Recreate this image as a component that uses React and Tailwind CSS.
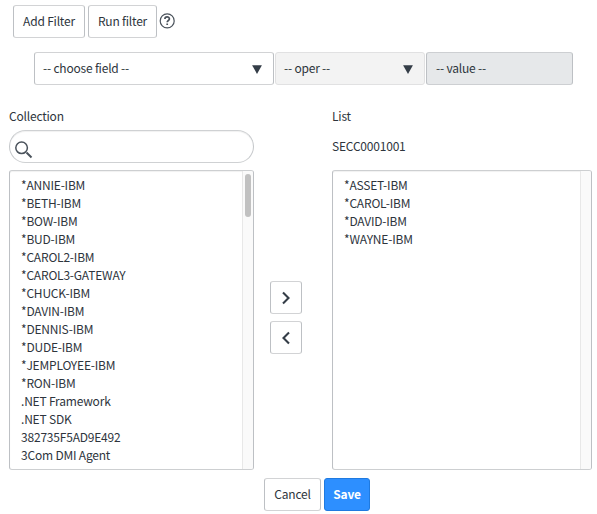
const COLLECTION = [
  '*ANNIE-IBM', '*BETH-IBM', '*BOW-IBM', '*BUD-IBM', '*CAROL2-IBM', '*CAROL3-GATEWAY',
  '*CHUCK-IBM', '*DAVIN-IBM', '*DENNIS-IBM', '*DUDE-IBM', '*JEMPLOYEE-IBM', '*RON-IBM',
  '.NET Framework', '.NET SDK', '382735F5AD9E492', '3Com DMI Agent',
];
const SELECTED = ['*ASSET-IBM', '*CAROL-IBM', '*DAVID-IBM', '*WAYNE-IBM'];

const BUTTON =
  'flex shrink-0 items-center justify-center rounded-[3px] border border-[#bdc0c4] border-y-[#d2d3d5] bg-white pb-[2px] whitespace-nowrap';

function Caret() {
  return (
    <svg width="10" height="9" viewBox="0 0 10 9" className="mt-[3px] shrink-0">
      <path d="M0.1 0.2H9.9L5 8.9Z" fill="#343d47" />
    </svg>
  );
}

function ListBox({ items, thumb, className }) {
  return (
    <div className={'flex h-[300px] overflow-hidden rounded-[3px] border border-[#bdc0c4] border-y-[#cdcfd1] shadow-[inset_0_1px_1px_rgba(0,0,0,0.06)] ' + className}>
      <ul className="grow pt-[5px] pl-[11px]">
        {items.map((item) => (
          <li key={item} className="h-[18px] leading-[18px] whitespace-nowrap">{item}</li>
        ))}
      </ul>
      <div className="flex w-[11px] shrink-0 justify-center border-l border-[#e8e8e8] bg-[#fafafa] pt-[3px]">
        {thumb && <div className="h-[43px] w-[6px] rounded-full bg-[#c1c1c1]" />}
      </div>
    </div>
  );
}

function Chevron({ d }) {
  return (
    <svg width="10" height="14" viewBox="0 0 10 14" fill="none" stroke="#343d47" strokeWidth="2.1" className="mt-[2px]">
      <path d={d} />
    </svg>
  );
}

export default function App() {
  return (
    <div className="h-[514px] w-[597px] overflow-hidden bg-white pt-[5px] font-['Noto_Sans_CJK_SC',sans-serif] text-[12px] leading-[18px] tracking-[-0.2px] text-[#2e353d]">
      <div className="flex h-[33px] pl-[13px]">
        <button className={BUTTON + ' w-[72px]'}>Add Filter</button>
        <button className={BUTTON + ' ml-[3px] w-[69px]'}>Run filter</button>
        <svg width="16" height="16" viewBox="0 0 16 16" fill="none" stroke="#4a525b" className="mt-[8px] ml-[2px]">
          <circle cx="8.2" cy="7.9" r="7" strokeWidth="1.2" />
          <path d="M5.9 6.1C5.9 3.2 10.4 3.2 10.4 6C10.4 7.5 8.2 7.5 8.2 9.3M8.2 10.6V12" strokeWidth="1.7" />
        </svg>
      </div>

      <div className="mt-[14px] flex h-[33px] gap-px pl-[34px]">
        <div className="flex w-[240px] items-center justify-between rounded-[3px] border border-[#bdc0c4] border-y-[#d2d3d5] pr-[11px] pb-[2px] pl-[8px]">
          <span>-- choose field --</span>
          <Caret />
        </div>
        <div className="flex w-[150px] items-center justify-between rounded-[3px] border border-[#e1e1e2] bg-[#f3f3f3] pr-[11px] pb-[2px] pl-[8px]">
          <span>-- oper --</span>
          <Caret />
        </div>
        <div className="flex w-[147px] items-center rounded-[3px] border border-[#bdc0c4] border-y-[#cdcfd2] bg-[#e6e8ea] pb-px pl-[9px]">-- value --</div>
      </div>

      <div className="mt-[22px] flex pl-[9px]">
        <div className="w-[245px]">
          <div className="h-[23px]">Collection</div>
          <div className="flex h-[33px] rounded-full border border-[#c4c7ca] border-y-[#cfd1d3] pt-[10px] pl-[5px] shadow-[inset_0_1px_1px_rgba(0,0,0,0.06)]">
            <svg width="18" height="18" viewBox="0 0 18 18" fill="none" stroke="#4a525b">
              <circle cx="6.6" cy="6.8" r="5.8" strokeWidth="1.5" />
              <path d="M11.5 11.5L16.5 16.5" strokeWidth="2" />
            </svg>
          </div>
          <ListBox items={COLLECTION} thumb className="mt-[7px]" />
        </div>
        <div className="mt-[174px] ml-[16px] flex w-[32px] flex-col gap-[7px]">
          <button className={BUTTON + ' h-[33px]'}><Chevron d="M2 1.5L7.5 7L2 12.5" /></button>
          <button className={BUTTON + ' h-[33px]'}><Chevron d="M8 1.5L2.5 7L8 12.5" /></button>
        </div>
        <div className="ml-[30px] w-[260px]">
          <div className="h-[30px]">List</div>
          <div className="h-[33px]">SECC0001001</div>
          <ListBox items={SELECTED} />
        </div>
      </div>

      <div className="mt-[8px] flex h-[33px] gap-[3px] pl-[264px]">
        <button className={BUTTON + ' w-[57px]'}>Cancel</button>
        <button className="w-[46px] rounded-[3px] border border-[#1f7ae0] bg-[#2d8fff] pb-[2px] font-bold text-white">Save</button>
      </div>
    </div>
  );
}
